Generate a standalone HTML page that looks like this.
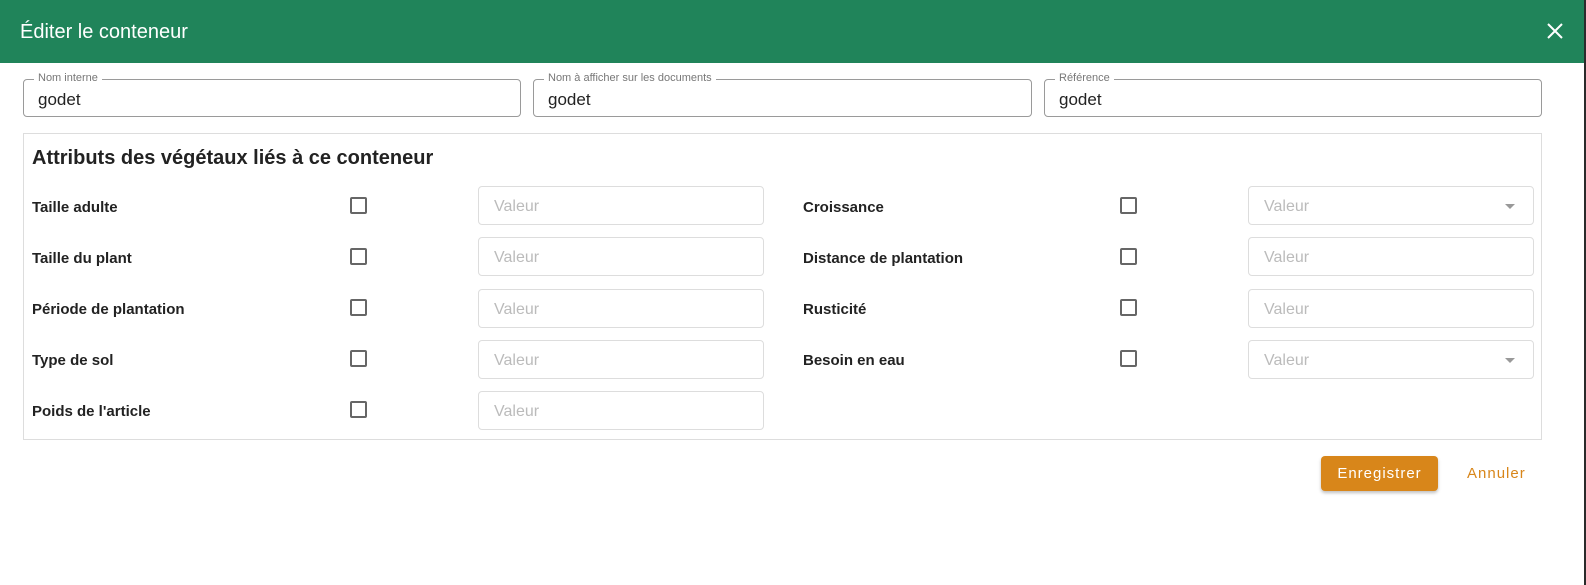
<!DOCTYPE html>
<html><head><meta charset="utf-8"><style>
*{box-sizing:border-box;margin:0;padding:0}
body{width:1586px;height:585px;background:#2b2b2b;font-family:"Liberation Sans",sans-serif;position:relative;overflow:hidden}
.page{position:absolute;left:0;top:0;width:1584px;height:585px;background:#fff}
.hdr{position:absolute;left:0;top:0;width:1584px;height:63px;background:#20845a;color:#fff;font-size:20px;padding:21px 0 0 20px}
.x{position:absolute;right:16px;top:18px}
.fld{position:absolute;top:79px;height:38px;border:1px solid #9a9a9a;border-radius:4px;font-size:17px;color:#222;padding:10px 0 0 14px}
.fld span{position:absolute;top:-8px;left:10px;background:#fff;padding:0 4px;font-size:11px;color:#777}
.box{position:absolute;left:23px;top:133px;width:1519px;height:307px;border:1px solid #ddd}
.title{position:absolute;left:32px;top:147px;font-size:20px;font-weight:bold;color:#222}
.lbl{position:absolute;font-size:15px;font-weight:bold;color:#222}
.cb{position:absolute;width:17px;height:17px;border:2px solid #666;border-radius:2px}
.in{position:absolute;width:286px;height:39px;border:1px solid #ddd;border-radius:4px;font-size:16px;color:#bbb;padding:11px 0 0 15px}
.arr{position:absolute;right:18px;top:17px;border-left:5px solid transparent;border-right:5px solid transparent;border-top:5px solid #999}
.btn{position:absolute;left:1321px;top:456px;width:117px;height:35px;background:#d8861a;border-radius:4px;color:#fff;font-size:15px;text-align:center;padding-top:9px;letter-spacing:1px;box-shadow:0 2px 3px rgba(0,0,0,.25)}
.ann{position:absolute;left:1467px;top:465px;color:#d8861a;font-size:15px;letter-spacing:1px}
</style></head><body><div class="page">
<div class="hdr">Éditer le conteneur
<svg class="x" width="26" height="26" viewBox="0 0 26 26"><path d="M6 6L20 20M20 6L6 20" stroke="#fff" stroke-width="2"/></svg></div>
<div class="fld" style="left:23px;width:498px"><span>Nom interne</span>godet</div>
<div class="fld" style="left:533px;width:499px"><span>Nom à afficher sur les documents</span>godet</div>
<div class="fld" style="left:1044px;width:498px"><span>Référence</span>godet</div>
<div class="box"></div>
<div class="title">Attributs des végétaux liés à ce conteneur</div>

<div class="lbl" style="left:32px;top:199px">Taille adulte</div><div class="cb" style="left:350px;top:197px"></div><div class="in" style="left:478px;top:186px">Valeur</div>
<div class="lbl" style="left:32px;top:250px">Taille du plant</div><div class="cb" style="left:350px;top:248px"></div><div class="in" style="left:478px;top:237px">Valeur</div>
<div class="lbl" style="left:32px;top:301px">Période de plantation</div><div class="cb" style="left:350px;top:299px"></div><div class="in" style="left:478px;top:289px">Valeur</div>
<div class="lbl" style="left:32px;top:352px">Type de sol</div><div class="cb" style="left:350px;top:350px"></div><div class="in" style="left:478px;top:340px">Valeur</div>
<div class="lbl" style="left:32px;top:403px">Poids de l'article</div><div class="cb" style="left:350px;top:401px"></div><div class="in" style="left:478px;top:391px">Valeur</div>

<div class="lbl" style="left:803px;top:199px">Croissance</div><div class="cb" style="left:1120px;top:197px"></div><div class="in" style="left:1248px;top:186px">Valeur<div class="arr"></div></div>
<div class="lbl" style="left:803px;top:250px">Distance de plantation</div><div class="cb" style="left:1120px;top:248px"></div><div class="in" style="left:1248px;top:237px">Valeur</div>
<div class="lbl" style="left:803px;top:301px">Rusticité</div><div class="cb" style="left:1120px;top:299px"></div><div class="in" style="left:1248px;top:289px">Valeur</div>
<div class="lbl" style="left:803px;top:352px">Besoin en eau</div><div class="cb" style="left:1120px;top:350px"></div><div class="in" style="left:1248px;top:340px">Valeur<div class="arr"></div></div>

<div class="btn">Enregistrer</div>
<div class="ann">Annuler</div>
</div></body></html>
